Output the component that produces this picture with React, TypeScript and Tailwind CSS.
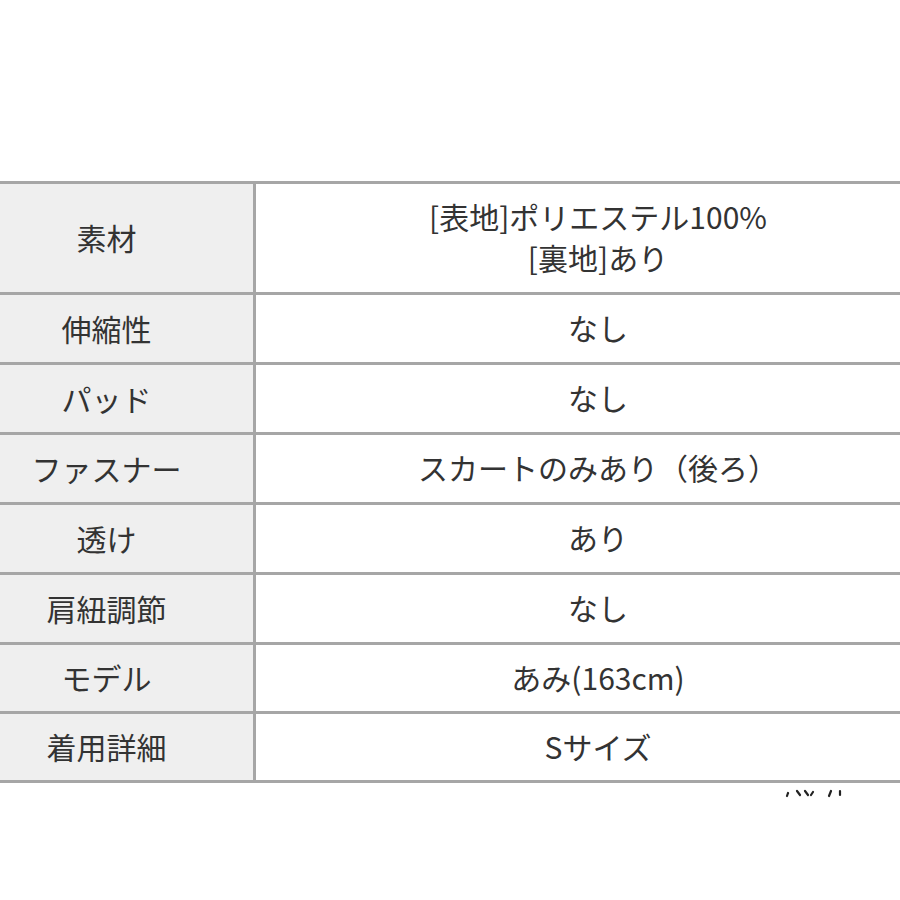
const rows: { label: string; value: string[]; h: string }[] = [
  { label: "素材", value: ["[表地]ポリエステル100%", "[裏地]あり"], h: "h-[111px]" },
  { label: "伸縮性", value: ["なし"], h: "h-[70px]" },
  { label: "パッド", value: ["なし"], h: "h-[70px]" },
  { label: "ファスナー", value: ["スカートのみあり（後ろ）"], h: "h-[70px]" },
  { label: "透け", value: ["あり"], h: "h-[70px]" },
  { label: "肩紐調節", value: ["なし"], h: "h-[70px]" },
  { label: "モデル", value: ["あみ(163cm)"], h: "h-[69px]" },
  { label: "着用詳細", value: ["Sサイズ"], h: "h-[69px]" },
];

export default function App() {
  return (
    <div className="w-[900px] h-[900px] overflow-hidden bg-white font-['Noto_Sans_CJK_JP','Noto_Sans',sans-serif] text-[#333333]">
      <div className="h-[181px]" />
      <div className="ml-[-40px] w-[980px] border-t-[3px] border-[#a6a6a6]">
        {rows.map((row) => (
          <div key={row.label} className={`flex border-b-[3px] border-[#a6a6a6] ${row.h}`}>
            <div className="w-[296px] shrink-0 bg-[#efefef] border-r-[3px] border-[#a6a6a6] flex items-center justify-center text-[30px] leading-none pb-[2px]">
              {row.label}
            </div>
            <div className="flex-1 flex flex-col items-center justify-center text-[30px] leading-[41px] pb-[2px]">
              {row.value.map((v) => (
                <span key={v}>{v}</span>
              ))}
            </div>
          </div>
        ))}
      </div>
      {/* cut-off fragment of the next text block */}
      <div className="ml-[784px] mt-[4px]">
        <svg width="70" height="12" viewBox="0 0 70 12" stroke="#222" strokeWidth="2.2" strokeLinecap="round">
          <line x1="4" y1="6" x2="3" y2="9" />
          <line x1="13" y1="4" x2="16" y2="8" />
          <line x1="21" y1="4" x2="24" y2="8" />
          <line x1="29" y1="5" x2="27" y2="8" />
          <line x1="47" y1="4" x2="45" y2="9" />
          <line x1="56" y1="4" x2="56" y2="8" />
        </svg>
      </div>
    </div>
  );
}
